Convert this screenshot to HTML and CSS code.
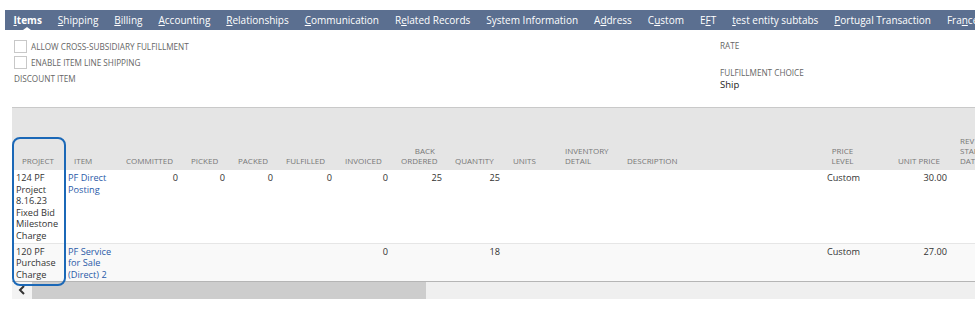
FILE: index.html
```html
<!DOCTYPE html>
<html lang="en">
<head>
  <meta charset="UTF-8">
  <title>Sales Order - Items</title>
  <link rel="stylesheet" href="styles.css">
</head>
<body>
  <div class="page">

    <!-- Subtab bar -->
    <nav class="tabs">
      <span class="tab active"><u>I</u>tems</span>
      <span class="tab"><u>S</u>hipping</span>
      <span class="tab"><u>B</u>illing</span>
      <span class="tab"><u>A</u>ccounting</span>
      <span class="tab"><u>R</u>elationships</span>
      <span class="tab"><u>C</u>ommunication</span>
      <span class="tab">R<u>e</u>lated Records</span>
      <span class="tab">System Information</span>
      <span class="tab">A<u>d</u>dress</span>
      <span class="tab">C<u>u</u>stom</span>
      <span class="tab">E<u>F</u>T</span>
      <span class="tab"><u>t</u>est entity subtabs</span>
      <span class="tab"><u>P</u>ortugal Transaction</span>
      <span class="tab">Fra<u>n</u>ce</span>
    </nav>

    <!-- Body fields -->
    <div class="fields">
      <div class="field-col">
        <label class="check"><span class="box"></span>Allow Cross-Subsidiary Fulfillment</label>
        <label class="check"><span class="box"></span>Enable Item Line Shipping</label>
        <div class="field-label discount">Discount Item</div>
      </div>
      <div class="field-col right">
        <div class="field-label rate">Rate</div>
        <div class="field-label">Fulfillment Choice</div>
        <div class="field-value">Ship</div>
      </div>
    </div>

    <!-- Item sublist -->
    <div class="grid-wrap">
      <table class="grid">
        <colgroup>
          <col style="width:52px"><col style="width:52px"><col style="width:65px">
          <col style="width:47px"><col style="width:48px"><col style="width:59px">
          <col style="width:56px"><col style="width:54px"><col style="width:58px">
          <col style="width:52px"><col style="width:62px"><col style="width:183px">
          <col style="width:85px"><col style="width:65px"><col style="width:60px">
        </colgroup>
        <thead>
          <tr>
            <th>Project</th>
            <th>Item</th>
            <th class="num">Committed</th>
            <th class="num">Picked</th>
            <th class="num">Packed</th>
            <th class="num">Fulfilled</th>
            <th class="num">Invoiced</th>
            <th class="num">Back<br>Ordered</th>
            <th class="num">Quantity</th>
            <th>Units</th>
            <th>Inventory<br>Detail</th>
            <th>Description</th>
            <th class="mid">Price<br>Level</th>
            <th class="num">Unit Price</th>
            <th>Rev<br>Start<br>Date</th>
          </tr>
        </thead>
        <tbody>
          <tr>
            <td>124 PF Project 8.16.23 Fixed Bid Milestone Charge</td>
            <td><a href="#">PF Direct Posting</a></td>
            <td class="num">0</td>
            <td class="num">0</td>
            <td class="num">0</td>
            <td class="num">0</td>
            <td class="num">0</td>
            <td class="num">25</td>
            <td class="num">25</td>
            <td></td>
            <td></td>
            <td></td>
            <td class="mid">Custom</td>
            <td class="num">30.00</td>
            <td></td>
          </tr>
          <tr class="alt">
            <td>120 PF Purchase Charge</td>
            <td><a href="#">PF Service for Sale (Direct) 2</a></td>
            <td class="num"></td>
            <td class="num"></td>
            <td class="num"></td>
            <td class="num"></td>
            <td class="num">0</td>
            <td class="num"></td>
            <td class="num">18</td>
            <td></td>
            <td></td>
            <td></td>
            <td class="mid">Custom</td>
            <td class="num">27.00</td>
            <td></td>
          </tr>
        </tbody>
      </table>

      <!-- Horizontal scrollbar -->
      <div class="hscroll">
        <span class="arrow">
          <svg width="10" height="10" viewBox="0 0 10 10"><polyline points="7,1 3,5 7,9" fill="none" stroke="#333" stroke-width="2"/></svg>
        </span>
        <span class="thumb"></span>
      </div>

      <!-- callout around the project column -->
      <div class="callout"></div>
    </div>

  </div>
</body>
</html>
```

FILE: styles.css
```css
body {
  margin: 0;
  font-family: 'Open Sans', sans-serif;
  background: #fff;
  color: #333;
}

.page {
  padding: 10px 0 0 5px;
}

/* Subtab bar */
.tabs {
  display: flex;
  height: 20px;
  background-color: #5b6f90;
  white-space: nowrap;
  overflow: hidden;
}

.tab {
  position: relative;
  color: #fff;
  font-size: 10px;
  line-height: 20px;
  padding: 0 8px 0 8.5px;
  margin-right: -0.5px;
}

.tab.active {
  font-weight: bold;
}

.tab.active::after {
  content: '';
  position: absolute;
  left: 50%;
  bottom: 0;
  margin-left: -4px;
  border: 4px solid transparent;
  border-bottom: 3px solid #fff;
  border-top: 0;
}

/* Fields */
.fields {
  display: grid;
  grid-template-columns: 706px 1fr;
  padding: 8px 0 0 9px;
  height: 69px;
}

.check {
  display: flex;
  align-items: center;
  height: 16px;
  font-size: 8.2px;
  text-transform: uppercase;
  color: #666;
}

.box {
  width: 11px;
  height: 11px;
  border: 1px solid #c8c8c8;
  background: #fff;
  margin-right: 4px;
}

.field-label {
  font-size: 8.2px;
  text-transform: uppercase;
  color: #666;
  line-height: 12px;
}

.discount {
  margin-top: 3px;
}

.right .rate {
  margin-top: 2px;
  margin-bottom: 15px;
}

.field-value {
  font-size: 9.5px;
  line-height: 12px;
  color: #222;
}

/* Item sublist */
.grid-wrap {
  position: relative;
  margin-left: 7px;
  width: 963px;
  overflow: hidden;
}

.grid {
  width: 998px;
  table-layout: fixed;
  border-collapse: collapse;
}

.grid th {
  background-color: #e5e5e5;
  border-top: 1px solid #c9c9c9;
  height: 58px;
  padding: 0 4px 4px 10px;
  font-size: 8px;
  line-height: 10px;
  font-weight: normal;
  text-transform: uppercase;
  color: #777;
  text-align: left;
  vertical-align: bottom;
  white-space: nowrap;
}

.grid th.num {
  text-align: right;
  padding-right: 10px;
}

.grid th.mid,
.grid td.mid {
  text-align: center;
  padding-left: 4px;
}

.grid td {
  font-size: 9.2px;
  line-height: 11.5px;
  padding: 2px 2px 2px 4px;
  vertical-align: top;
  color: #333;
}

.grid td.num {
  text-align: right;
  padding-right: 3px;
}

.grid tbody tr:first-child td {
  height: 69px;
}

.grid tr.alt td {
  background-color: #f9f9f9;
  border-top: 1px solid #e6e6e6;
  border-bottom: 1px solid #b5b5b5;
  padding-top: 1.5px;
  padding-bottom: 0.5px;
}

.grid a {
  color: #2a5aa8;
  text-decoration: none;
}

/* Scrollbar */
.hscroll {
  display: flex;
  height: 17px;
  background-color: #efefef;
}

.arrow {
  width: 20px;
  display: flex;
  align-items: center;
  justify-content: center;
  background-color: #f3f3f3;
}

.thumb {
  width: 394px;
  background-color: #cdcdcd;
}

/* Highlight drawn over the project column */
.callout {
  position: absolute;
  left: 0;
  top: 30px;
  width: 50px;
  height: 145px;
  border: 2px solid #1b68b7;
  border-radius: 8px;
}
```
